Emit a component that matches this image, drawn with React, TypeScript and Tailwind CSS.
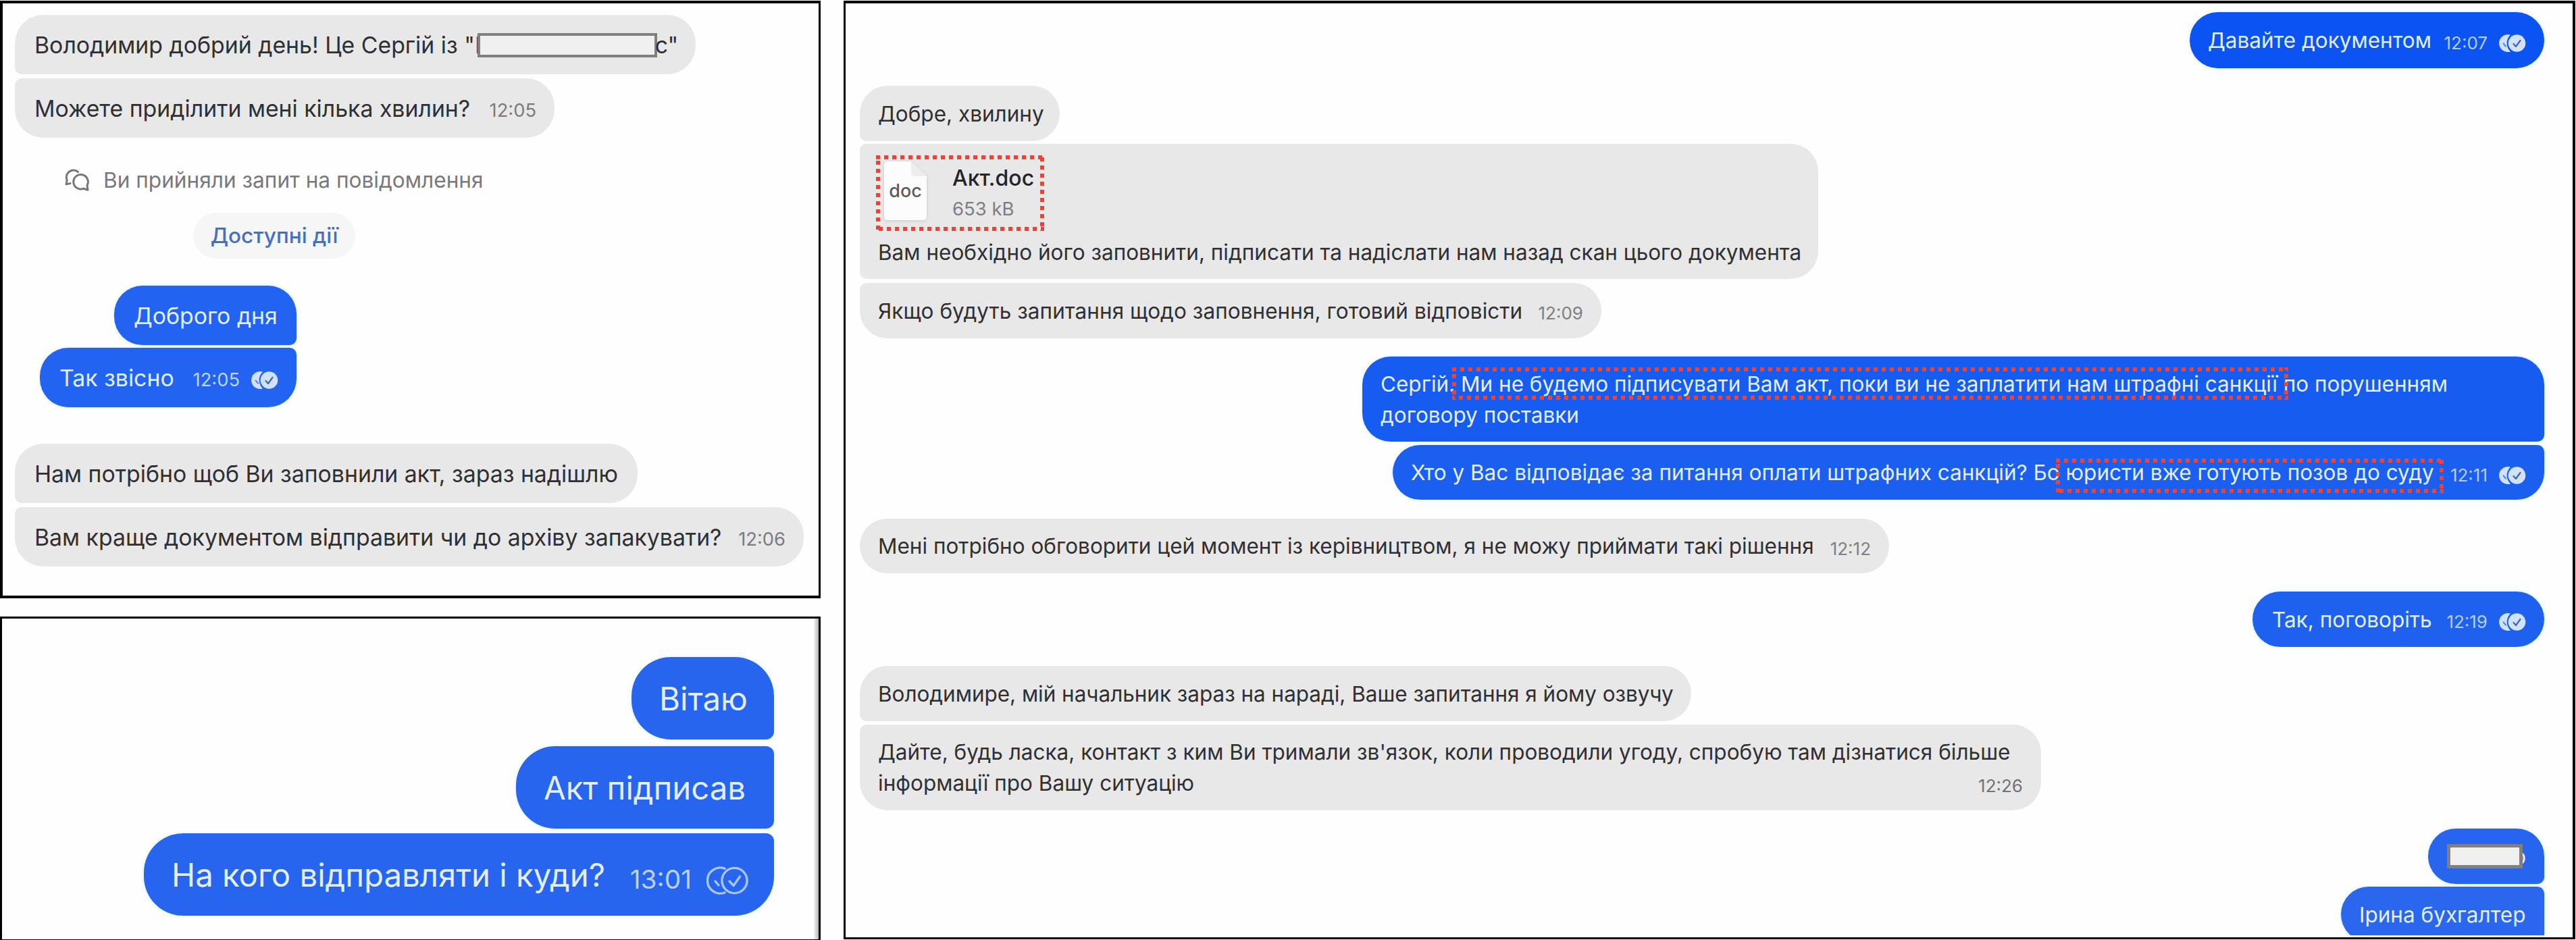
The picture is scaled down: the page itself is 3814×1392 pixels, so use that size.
import type { ReactNode } from "react";

/* Dashed red frame laid over a highlighted fragment */
function Mark({ className }: { className: string }) {
  return (
    <svg className={`absolute ${className}`} aria-hidden="true">
      <rect x="0" y="0" width="100%" height="100%" fill="none" stroke="#ee4334" strokeWidth="12" strokeDasharray="6 6" />
    </svg>
  );
}

/* Double "read" badge, filled variant */
function Read() {
  return (
    <svg viewBox="0 0 41 28" className="h-[28px] w-[41px] shrink-0">
      <path d="M18 1.600A13 13 0 1 0 18 26.400A17 17 0 0 1 18 1.600Z" fill="#d0e2ff" />
      <path d="M7.500 14.500l3.500 4" stroke="#5f86d6" strokeWidth="2.200" fill="none" strokeLinecap="round" />
      <circle cx="27.500" cy="14" r="12.800" fill="#d0e2ff" />
      <path d="M22.500 15l3.500 4 6.500-9" stroke="#44669f" strokeWidth="2.200" fill="none" strokeLinecap="round" strokeLinejoin="round" />
    </svg>
  );
}

/* Double "delivered" badge, outlined variant */
function Delivered() {
  return (
    <svg viewBox="0 0 62 42" className="h-[42px] w-[62px] shrink-0" fill="none" stroke="#a9c6fb" strokeWidth="3.400" strokeLinecap="round" strokeLinejoin="round">
      <path d="M27 3.200A19 19 0 1 0 27 38.800" />
      <path d="M13 22l5 6" />
      <circle cx="41.500" cy="21" r="18.600" />
      <path d="M34 22l6 6.500 9.500-13.500" />
    </svg>
  );
}

function ChatsIcon() {
  return (
    <svg viewBox="0 0 38 35" className="h-[35px] w-[38px] shrink-0" fill="none" stroke="#77777a" strokeWidth="3" strokeLinecap="round" strokeLinejoin="round">
      <path d="M20.500 5.500A10.500 10.500 0 0 0 4.200 17.800L3 23.800L9 22.600" />
      <path d="M34 25.500A10.800 10.800 0 1 0 28.800 30.200L35 32.200Z" />
    </svg>
  );
}

function DocFile() {
  return (
    <div className="relative ml-[36px] flex h-[87px] w-[63px] items-center justify-center">
      <svg viewBox="0 0 63 87" className="absolute inset-0 h-full w-full overflow-visible drop-shadow-[0_1px_2px_rgba(0,0,0,0.14)]">
        <path d="M6 0H40L63 22V81Q63 87 57 87H6Q0 87 0 81V6Q0 0 6 0Z" fill="#fcfcfc" />
        <path d="M40 0V16Q40 22 46 22H63Z" fill="#ededed" />
      </svg>
      <span className="relative text-[27px] font-medium leading-none text-[#5b5b5d]">doc</span>
    </div>
  );
}

function Panel({ className, children }: { className: string; children: ReactNode }) {
  return <section className={`relative flex flex-col overflow-hidden border-black bg-[#fefefe] ${className}`}>{children}</section>;
}

const IN = "relative flex shrink-0 items-center self-start bg-[#e8e8e8] text-[#303032] whitespace-nowrap";
const OUT = "relative flex shrink-0 items-center self-end text-[#e2eeff] whitespace-nowrap shadow-[0_0_5px_#c9ecff]";
const A = "h-[88px] pt-[2px] pl-[29px] pr-[27px] text-[33.8px]";
const D = "pt-px pl-[27px] pr-[27px] text-[31.5px]";
const C = "h-[122px] pl-[41px] pr-[38px] pt-[2px] text-[47.3px]";

function Time({ children, className }: { children: ReactNode; className: string }) {
  return <time className={`ml-auto ${className}`}>{children}</time>;
}

const T_A = "pt-[5px] text-[27.3px] text-[#7c7c7e]";
const T_D = "pt-[7px] text-[26px] text-[#808082]";
const T_OUT = "pt-[7px] pr-[16px] text-[26px] text-[#b4cefc]";

export default function App() {
  return (
    <main className="flex h-[1392px] w-[3814px] overflow-hidden bg-[#fefefe] font-['Inter','Liberation_Sans',sans-serif] leading-[46px]">
      <div className="flex w-[1215px] shrink-0 flex-col gap-[27px] pt-px">
        <Panel className="h-[885px] w-full border-t-4 border-r-3 border-b-4 border-l-4 pl-[18px]">
          <div className={`${IN} ${A} mt-[17px] w-[1008px] rounded-[42px] rounded-bl-[10px]`}>
            <span>Володимир добрий день! Це Сергій із "Б</span>
            <span className="relative -ml-[18px] h-[36px] w-[266px] shrink-0 border-4 border-[#808080] bg-[#f0f0f0]" />
            <span className="relative -ml-[3px]">с"</span>
          </div>
          <div className={`${IN} ${A} mt-[6px] w-[799px] rounded-[42px] rounded-tl-[10px]`}>
            <span>Можете приділити мені кілька хвилин?</span>
            <Time className={T_A}>12:05</Time>
          </div>
          <div className="mt-[38px] ml-[73px] flex h-[48px] items-center gap-[20px] text-[31.600px] text-[#79797c]">
            <ChatsIcon />
            <span className="pt-[2px]">Ви прийняли запит на повідомлення</span>
          </div>
          <button className="mt-[25px] ml-[264px] flex h-[68px] w-[240px] shrink-0 items-center justify-center rounded-[34px] bg-[#f6f6f7] text-[31.500px] font-medium text-[#4470c4]">
            Доступні дії
          </button>
          <div className="mt-[40px] flex w-[417px] shrink-0 flex-col">
            <div className={`${OUT} ${A} w-[270px] rounded-[42px] rounded-br-[10px] bg-[#2263f1]`}>Доброго дня</div>
            <div className={`${OUT} ${A} mt-[4px] w-[380px] rounded-[42px] rounded-tr-[10px] bg-[#2263f1]`}>
              <span>Так звісно</span>
              <Time className="pt-[5px] pr-[16px] text-[27.3px] text-[#bdd4fd]">12:05</Time>
              <span className="pt-[6px]"><Read /></span>
            </div>
          </div>
          <div className={`${IN} ${A} mt-[54px] w-[922px] rounded-[42px] rounded-bl-[10px]`}>Нам потрібно щоб Ви заповнили акт, зараз надішлю</div>
          <div className={`${IN} ${A} mt-[6px] w-[1168px] rounded-[42px] rounded-tl-[10px]`}>
            <span>Вам краще документом відправити чи до архіву запакувати?</span>
            <Time className={T_A}>12:06</Time>
          </div>
        </Panel>

        <Panel className="h-[479px] w-full border-t-3 border-r-3 border-b border-l-3 pr-[66px]">
          <div className={`${OUT} ${C} mt-[57px] w-[211px] rounded-[58px] rounded-br-[12px] bg-[#2765ee]`}>Вітаю</div>
          <div className={`${OUT} ${C} mt-[10px] w-[382px] rounded-[58px] rounded-r-[12px] bg-[#2765ee]`}>Акт підписав</div>
          <div className={`${OUT} ${C} mt-[7px] w-[933px] rounded-[58px] rounded-tr-[12px] bg-[#2765ee]`}>
            <span>На кого відправляти і куди?</span>
            <Time className="pt-[11px] pr-[22px] text-[38.800px] text-[#b9d1fd]">13:01</Time>
            <span className="pt-[16px]"><Delivered /></span>
          </div>
          <div className="absolute inset-y-0 right-0 w-[7px] bg-linear-to-r from-[#f4f4f4] to-[#b5b5b5]" />
        </Panel>
      </div>

      <Panel className="mt-px ml-[34px] h-[1390px] w-[2564px] shrink-0 border-t-4 border-r-4 border-b-3 border-l-3 pr-[42px] pl-[21px]">
        <div className="flex h-[1380px] shrink-0 flex-col overflow-visible [clip-path:inset(0_-30px_0_-30px)]">
          <div className={`${OUT} ${D} mt-[13px] h-[83px] w-[525px] rounded-full bg-[#0c53f3]`}>
            <span>Давайте документом</span>
            <Time className={T_OUT}>12:07</Time>
            <span className="pt-[7px]"><Read /></span>
          </div>

          <div className={`${IN} ${D} mt-[26px] h-[82px] w-[296px] rounded-[41px] rounded-bl-[10px]`}>Добре, хвилину</div>
          <div className="relative mt-[4px] flex h-[200px] w-[1419px] shrink-0 flex-col self-start rounded-[41px] rounded-l-[10px] bg-[#e8e8e8] pt-[26px] text-[31.500px] whitespace-nowrap text-[#303032]">
            <div className="flex items-start gap-[38px]">
              <DocFile />
              <div className="flex flex-col pt-[2px]">
                <span className="h-[45px] text-[32px] font-medium text-[#252527]">Акт.doc</span>
                <span className="h-[46px] text-[27.500px] text-[#7e7e80]">653 kB</span>
              </div>
            </div>
            <span className="absolute bottom-[16px] left-[27px]">Вам необхідно його заповнити, підписати та надіслати нам назад скан цього документа</span>
            <Mark className="top-[17px] left-[24px] h-[112px] w-[249px]" />
          </div>
          <div className={`${IN} ${D} mt-[6px] h-[82px] w-[1098px] rounded-[41px] rounded-tl-[10px]`}>
            <span className="tracking-[0.05px]">Якщо будуть запитання щодо заповнення, готовий відповісти</span>
            <Time className={T_D}>12:09</Time>
          </div>

          <div className={`${OUT} ${D} mt-[27px] h-[126px] w-[1750px] rounded-[42px] rounded-br-[10px] bg-[#175cf0]`}>
            <p>
              Сергій. Ми не будемо підписувати Вам акт, поки ви не заплатити нам штрафні санкції по порушенням
              <br />
              договору поставки
            </p>
            <Mark className="top-[16px] left-[133px] h-[48px] w-[1238px]" />
          </div>
          <div className={`${OUT} ${D} mt-[5px] h-[81px] w-[1705px] rounded-[41px] rounded-tr-[10px] bg-[#1b5ff0]`}>
            <span>Хто у Вас відповідає за питання оплати штрафних санкцій? Бо юристи вже готують позов до суду</span>
            <Time className={T_OUT}>12:11</Time>
            <span className="pt-[7px]"><Read /></span>
            <Mark className="top-[20px] left-[982px] h-[51px] w-[574px]" />
          </div>

          <div className={`${IN} ${D} mt-[28px] h-[81px] w-[1524px] rounded-full`}>
            <span>Мені потрібно обговорити цей момент із керівництвом, я не можу приймати такі рішення</span>
            <Time className={T_D}>12:12</Time>
          </div>

          <div className={`${OUT} ${D} mt-[27px] h-[82px] w-[432px] rounded-full bg-[#1f61ef]`}>
            <span className="pl-[2px]">Так, поговоріть</span>
            <Time className={T_OUT}>12:19</Time>
            <span className="pt-[7px]"><Read /></span>
          </div>

          <div className={`${IN} ${D} mt-[28px] h-[82px] w-[1231px] rounded-[41px] rounded-bl-[10px]`}>
            <span className="tracking-[-0.04px]">Володимире, мій начальник зараз на нараді, Ваше запитання я йому озвучу</span>
          </div>
          <div className={`${IN} ${D} mt-[5px] h-[127px] w-[1749px] rounded-[42px] rounded-tl-[10px]`}>
            <p>
              Дайте, будь ласка, контакт з ким Ви тримали зв'язок, коли проводили угоду, спробую там дізнатися більше
              <br />
              інформації про Вашу ситуацію
            </p>
            <time className="absolute right-[27px] bottom-[13px] text-[26px] text-[#737375]">12:26</time>
          </div>

          <div className={`${OUT} ${D} mt-[27px] h-[82px] w-[172px] rounded-[41px] rounded-br-[10px] bg-[#2765ee]`}>
            <span className="ml-auto">р</span>
            <span className="absolute top-[23px] left-[28px] h-[36px] w-[112px] border-5 border-[#808080] bg-[#f0f0f0]" />
          </div>
          <div className={`${OUT} ${D} mt-[4px] h-[82px] w-[301px] rounded-[41px] rounded-r-[10px] bg-[#2a66ee]`}>Ірина бухгалтер</div>
        </div>
      </Panel>
    </main>
  );
}
